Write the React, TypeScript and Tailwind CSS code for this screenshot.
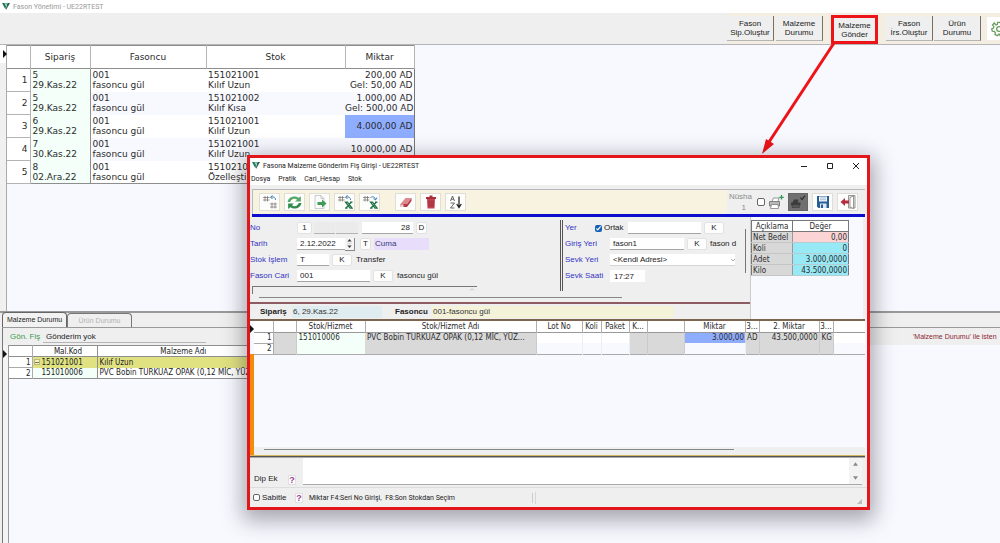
import type { ReactNode } from "react";

const orders = [
  { no: "5", date: "29.Kas.22", code: "151021001", name: "Kılıf Uzun", qty: "200,00 AD", came: "Gel: 50,00 AD" },
  { no: "5", date: "29.Kas.22", code: "151021002", name: "Kılıf Kısa", qty: "1.000,00 AD", came: "Gel: 500,00 AD" },
  { no: "6", date: "29.Kas.22", code: "151021001", name: "Kılıf Uzun", qty: "4.000,00 AD", selected: true },
  { no: "7", date: "30.Kas.22", code: "151021001", name: "Kılıf Uzun", qty: "10.000,00 AD" },
  { no: "8", date: "02.Ara.22", code: "15102100", name: "Özelleştir", qty: "" },
];

const summary = [
  { label: "Net Bedel", value: "0,00", color: "bg-[#fbd5d5]" },
  { label: "Koli", value: "0", color: "bg-[#97e9f5]" },
  { label: "Adet", value: "3.000,0000", color: "bg-[#97e9f5]" },
  { label: "Kilo", value: "43.500,0000", color: "bg-[#97e9f5]" },
];

const grid = "font-['DejaVu_Sans',sans-serif]";
const smallGrid = "font-['DejaVu_Sans_Condensed','DejaVu_Sans',sans-serif]";
const field = "h-3 border-b border-[#a5a5a5] bg-white px-[3px] text-[8px] outline-none";
const label = "w-[47px] shrink-0 text-[#3434c4]";

function Logo() {
  return (
    <svg viewBox="0 0 16 14" className="h-[7px] w-2 shrink-0">
      <path d="M0 0h5l3 6-1 7z" fill="#1d7a5c" />
      <path d="M6 0h4L8.500 5z" fill="#4aa586" />
      <path d="M11 0h5L8 14l0-4z" fill="#23644f" />
    </svg>
  );
}

function MainButton({ top, bottom, mark }: { top: string; bottom: string; mark?: boolean }) {
  return (
    <button
      className={
        mark
          ? "h-[29px] w-[47px] shrink-0 self-end border-[3px] border-[#ec1319] bg-[#efefef] text-[8px] leading-[9px]"
          : "h-[25px] w-[47px] shrink-0 border-r border-b border-[#75706a] border-b-[#b5b5b5] bg-[#efefef] text-[8px] leading-[9px]"
      }
    >
      <span className="-mx-1 block">{top}</span>
      <span className="-mx-1 block">{bottom}</span>
    </button>
  );
}

function ToolButton({ title, dark, children }: { title: string; dark?: boolean; children: ReactNode }) {
  return (
    <button
      aria-label={title}
      className={
        dark
          ? "flex h-[18px] w-5 shrink-0 items-center justify-center border border-[#666] bg-[#707070]"
          : "flex h-[18px] w-[21px] shrink-0 items-center justify-center border border-[#e0ded6] bg-[#fdfdfb]"
      }
    >
      {children}
    </button>
  );
}

function SmallButton({ text, wide }: { text: string; wide?: boolean }) {
  return (
    <button
      className={
        wide
          ? "h-3 w-5 shrink-0 rounded-xs border border-[#e2e2e2] bg-[#fdfdfd] text-[8px] leading-[10px]"
          : "h-3 w-[11px] shrink-0 rounded-xs border border-[#e2e2e2] bg-[#fdfdfd] text-[8px] leading-[10px]"
      }
    >
      {text}
    </button>
  );
}

function HashIcon({ excel, down }: { excel?: boolean; down?: boolean }) {
  return (
    <svg viewBox="0 0 32 28" className="h-[14px] w-4" fill="none">
      <path d="M6 2v11M11 2v11M2 5h13M2 10h13" stroke="#77736e" strokeWidth="1.500" />
      {down ? (
        <path d="M17 5c5-3 9-1 10 4M23 7l4 3 3-5" stroke="#3f7fb8" strokeWidth="2" />
      ) : (
        <path d="M27 10c0-5-3-7-9-6M21 1l-4 3 4 4" stroke="#3f7fb8" strokeWidth="2" />
      )}
      {excel ? (
        <path d="M17 14h4l9 12h-4zM29 14l-11 12M16 26h5M26 14h5" stroke="#217346" strokeWidth="2.500" />
      ) : (
        <path d="M20 15v12M26 15v12M16 18h14M16 24h14" stroke="#77736e" strokeWidth="1.500" />
      )}
    </svg>
  );
}

function RefreshIcon() {
  return (
    <svg viewBox="0 0 32 28" className="h-[15px] w-[17px]">
      <path d="M3 13C4 5 12 1 20 3l4 2 4-3v10H17l4-3c-6-4-11-1-13 4z" fill="#58a969" />
      <path d="M29 15c-1 8-9 12-17 10l-4-2-4 3V16h11l-4 3c6 4 11 1 13-4z" fill="#318b4b" />
    </svg>
  );
}

function ExportIcon() {
  return (
    <svg viewBox="0 0 28 28" className="size-[14px]">
      <path d="M4 1h12l6 6v20H4z" fill="#fafafa" stroke="#9a9a9a" />
      <path d="M16 1v6h6" fill="none" stroke="#9a9a9a" />
      <path d="M9 14h9V9l9 8-9 8v-5H9z" fill="#3f9c55" />
    </svg>
  );
}

function EraserIcon() {
  return (
    <svg viewBox="0 0 28 22" className="h-[11px] w-[14px]">
      <path d="M13 2h12l-9 12H3z" fill="#dc8a90" />
      <path d="M3 14h13v6H3zM16 14l9-12v6l-9 12z" fill="#b43c47" />
      <path d="M3 15h6v5H3z" fill="#f0d5d8" />
    </svg>
  );
}

function TrashIcon() {
  return (
    <svg viewBox="0 0 24 28" className="h-[14px] w-3">
      <path d="M9 1h6v3h7v4H2V4h7z" fill="#a92f3b" />
      <path d="M4 8h16l-1 19H5z" fill="#c54350" />
      <path d="M8 11v13M12 11v13M16 11v13" stroke="#8d2530" strokeWidth="1.500" />
    </svg>
  );
}

function SortIcon() {
  return (
    <svg viewBox="0 0 28 28" className="size-[14px]" fill="none" stroke="#555">
      <path d="M3 12L7 2l4 10M4.500 8.500h5M3 16h8l-8 10h8" strokeWidth="1.800" />
      <path d="M20 3v21M15.500 18l4.500 7 4.500-7" stroke="#222" strokeWidth="2.500" />
    </svg>
  );
}

function PrinterPlusIcon() {
  return (
    <svg viewBox="0 0 32 32" className="size-4 shrink-0" fill="none">
      <path d="M8 15l3-7h11l-2 7" fill="#fff" stroke="#777" strokeWidth="1.500" />
      <path d="M3 15h20v9H3z" fill="#b9b9b9" stroke="#666" strokeWidth="1.500" />
      <path d="M7 21h13l1 8H5z" fill="#fff" stroke="#777" strokeWidth="1.500" />
      <path d="M27 2v9M22.500 6.500h9" stroke="#33995b" strokeWidth="2.500" />
    </svg>
  );
}

function PrinterCheckIcon() {
  return (
    <svg viewBox="0 0 32 28" className="h-[14px] w-4" fill="none">
      <path d="M5 15l3-6h9l-1 6h5v6H2v-6z" fill="#3c3c3c" />
      <path d="M6 19h12l1 6H4z" fill="#585858" stroke="#333" />
      <path d="M21 5l3 4 6-8" stroke="#2e2e2e" strokeWidth="2.500" />
    </svg>
  );
}

function SaveIcon() {
  return (
    <svg viewBox="0 0 28 28" className="size-[14px]">
      <path d="M2 2h24v24H5l-3-3z" fill="#275d97" />
      <path d="M6 3h16v10H6z" fill="#f4f8fb" />
      <path d="M8 6h12M8 9.500h12" stroke="#89a9c7" strokeWidth="1.500" />
      <path d="M8 17h13v9H8z" fill="#dce8f2" />
      <path d="M10 19h4v7h-4z" fill="#275d97" />
    </svg>
  );
}

function ExitIcon() {
  return (
    <svg viewBox="0 0 32 28" className="h-[14px] w-4">
      <path d="M17 1h13v25H17z" fill="#ececec" stroke="#7a7a7a" strokeWidth="1.500" />
      <path d="M20 5l7-3v25l-7-3z" fill="#fff" stroke="#7a7a7a" strokeWidth="1.500" />
      <path d="M1 14l9-8v5h8v6h-8v5z" fill="#b52d3b" />
    </svg>
  );
}

function GearIcon() {
  return (
    <svg viewBox="0 0 24 24" className="size-4 shrink-0" fill="none" stroke="#6c9d61" strokeWidth="2">
      <path d="M10 2h4l.500 3 2 1 2.800-1.500 2.500 3-2 2.300.7 2.200 2.500 1-1 3.500-3 .2-1.500 2 .5 3-3.500 1.300L12 19.500 9.500 22 6 20.500l.5-3-1.500-2-3-.3-1-3.400 2.700-1.200.6-2.100-2-2.500 2.500-3L7.500 6l2-1z" />
      <circle cx="12" cy="12" r="3.500" />
    </svg>
  );
}

function OrdersTable() {
  const head = "border-r border-[#b4b4b4] font-normal";
  return (
    <table className={`${grid} w-[407px] table-fixed border-collapse border-y border-[#8e8e8e] bg-white text-[9px] leading-[10px] text-[#2c2c2c]`}>
      <colgroup>
        <col className="w-[23px]" />
        <col className="w-[60px]" />
        <col className="w-[116px]" />
        <col className="w-[139px]" />
        <col className="w-[69px]" />
      </colgroup>
      <thead>
        <tr className="h-[23px] border-b border-[#8e8e8e]">
          <th className={head}></th>
          <th className={head}>Sipariş</th>
          <th className={head}>Fasoncu</th>
          <th className={head}>Stok</th>
          <th className={head}>Miktar</th>
        </tr>
      </thead>
      <tbody>
        {orders.map((o, i) => (
          <tr key={i} className="h-[23px] even:bg-[#f8f8ff]">
            <td className="border-r border-b border-[#b4b4b4] bg-white p-0 pr-[2px] text-right">{i + 1}</td>
            <td className="border-r border-[#8e8e8e] bg-[#f3fff8] p-0 pl-[2px]">
              {o.no}
              <br />
              {o.date}
            </td>
            <td className="p-0 pl-[2px]">
              001
              <br />
              fasoncu gül
            </td>
            <td className="overflow-hidden p-0 pl-[2px] whitespace-nowrap">
              {o.code}
              <br />
              {o.name}
            </td>
            <td
              className={
                o.selected
                  ? "border-r border-[#777] bg-[#8fadff] p-0 pr-px text-right whitespace-nowrap"
                  : "border-r border-[#777] p-0 pr-px text-right whitespace-nowrap"
              }
            >
              {o.qty}
              {o.came && (
                <>
                  <br />
                  {o.came}
                </>
              )}
            </td>
          </tr>
        ))}
      </tbody>
    </table>
  );
}

function MaterialPanel() {
  return (
    <section className="flex min-h-[232px] flex-1 flex-col border-t-2 border-[#999] bg-[#efefef] pl-[2px]">
      <div className="flex h-[15px] items-end border-b border-[#999]">
        <button className="h-[15px] w-[65px] rounded-t-sm border border-b-0 border-[#666] bg-[#f2f2f2] text-[7px] whitespace-nowrap">
          Malzeme Durumu
        </button>
        <button className="h-[14px] w-[65px] rounded-t-sm border border-b-0 border-[#777] text-[7px] whitespace-nowrap text-[#b3b3b3]">
          Ürün Durumu
        </button>
      </div>
      <div className="flex h-[17px] items-center justify-between border-l border-[#777] pl-[7px]">
        <div className="flex items-center">
          <label htmlFor="shipment" className="w-[33px] text-[#3c9a4b]">
            Gön. Fiş
          </label>
          <input
            id="shipment"
            defaultValue="Gönderim yok"
            className="h-[13px] w-[163px] border-b border-[#b5b5b5] pl-[3px] text-[8px] outline-none"
          />
        </div>
        <p className="w-[87px] text-[7px] whitespace-nowrap text-[#8c2633]">'Malzeme Durumu' ile isten</p>
      </div>
      <div className="flex flex-1 border-l border-[#777] bg-[#f8f8ff]">
        <div className="w-[5px] shrink-0 bg-[#f4f4f4] pt-[5px]">
          <Marker />
        </div>
        <div className="min-w-0 flex-1 border-l border-[#999]">
          <table className={`${smallGrid} w-[300px] table-fixed border-collapse border-y border-[#8e8e8e] bg-white text-[8px] leading-[9px]`}>
            <colgroup>
              <col className="w-[23px]" />
              <col className="w-[65px]" />
              <col className="w-[212px]" />
            </colgroup>
            <thead>
              <tr className="h-[11px] border-b border-[#8e8e8e]">
                <th className="border-r border-[#aaa] p-0"></th>
                <th className="border-r border-[#8e8e8e] p-0 pl-[7px] font-normal">Mal.Kod</th>
                <th className="p-0 pr-[40px] font-normal">Malzeme Adı</th>
              </tr>
            </thead>
            <tbody>
              <tr className="h-[11px] bg-[#e0e281]">
                <td className="border-r border-b border-[#aaa] bg-white p-0 pr-px text-right">1</td>
                <td className="border-r border-[#8e8e8e] p-0 pl-px">
                  <div className="flex items-center gap-[2px]">
                    <button aria-label="Daralt" className="flex size-[6px] items-center border border-[#b8b77c] bg-[#f5f3c5]">
                      <span className="block h-px w-full bg-[#77754c]" />
                    </button>
                    151021001
                  </div>
                </td>
                <td className="p-0 pl-[2px]">Kılıf Uzun</td>
              </tr>
              <tr className="h-[11px]">
                <td className="border-r border-[#aaa] p-0 pr-px text-right">2</td>
                <td className="border-r border-[#8e8e8e] bg-[#f3fff8] p-0 pl-[9px]">151010006</td>
                <td className="p-0 pl-[2px] whitespace-nowrap">PVC Bobin TURKUAZ OPAK (0,12 MİC, YÜZ...</td>
              </tr>
            </tbody>
          </table>
        </div>
      </div>
    </section>
  );
}

function Marker() {
  return (
    <svg viewBox="0 0 4 8" className="h-2 w-1 shrink-0">
      <path d="M0 0l4 4-4 4z" fill="#111" />
    </svg>
  );
}

function DialogToolbar() {
  return (
    <div className="mx-[2px] mt-1 flex h-[25px] items-center border-t border-l border-[#b9b9b9] bg-[#f8f3e0] pl-[6px]">
      <div className="flex gap-1">
        <ToolButton title="Satır ekle"><HashIcon /></ToolButton>
        <ToolButton title="Yenile"><RefreshIcon /></ToolButton>
        <ToolButton title="Aktar"><ExportIcon /></ToolButton>
        <ToolButton title="Excel'den al"><HashIcon excel /></ToolButton>
        <ToolButton title="Excel'e gönder"><HashIcon excel down /></ToolButton>
      </div>
      <div className="ml-[15px] flex gap-1">
        <ToolButton title="Temizle"><EraserIcon /></ToolButton>
        <ToolButton title="Sil"><TrashIcon /></ToolButton>
        <ToolButton title="Sırala"><SortIcon /></ToolButton>
      </div>
      <div className="ml-auto flex h-full items-center bg-[#efefef] pr-[7px]">
        <label htmlFor="copies" className="w-[25px] text-right leading-[11px] text-[#8b8b8b]">
          Nüsha
          <span className="block pr-[6px]">1</span>
        </label>
        <input id="copies" type="checkbox" className="ml-[5px] size-2 appearance-none rounded-xs border border-[#666] bg-white" />
        <div className="ml-[3px] mr-1">
          <PrinterPlusIcon />
        </div>
        <div className="flex gap-1">
          <ToolButton title="Yazdır" dark><PrinterCheckIcon /></ToolButton>
          <ToolButton title="Kaydet"><SaveIcon /></ToolButton>
          <ToolButton title="Çıkış"><ExitIcon /></ToolButton>
        </div>
      </div>
    </div>
  );
}

function FormLeft() {
  return (
    <div className="w-[310px] shrink-0 pt-[5px]">
      <div className="flex flex-col gap-1">
        <div className="flex h-3 items-center">
          <label htmlFor="no" className={label}>No</label>
          <button className="mr-[2px] h-3 w-[15px] rounded-xs border border-[#e2e2e2] bg-[#fdfdfd] text-[8px] leading-[10px]">1</button>
          <span className="mr-px h-3 w-[21px] border-b border-[#b5b5b5] bg-[#ebebeb]" />
          <span className="mr-1 h-3 w-[22px] border-b border-[#b5b5b5] bg-[#ebebeb]" />
          <input id="no" defaultValue="28" className={`${field} mr-[3px] w-[51px] text-right`} />
          <SmallButton text="D" />
        </div>
        <div className="flex h-3 items-center">
          <label htmlFor="date" className={label}>Tarih</label>
          <input id="date" defaultValue="2.12.2022" className={`${field} w-[48px]`} />
          <button aria-label="Tarih değiştir" className="mr-[5px] flex h-[13px] w-[10px] items-center justify-center border-r border-b border-[#888] bg-[#f5f5f5]">
            <svg viewBox="0 0 10 18" className="h-[9px] w-[5px]">
              <path d="M5 0l4 5H1zM0 9h10M1 13h8l-4 5z" fill="#333" stroke="#999" strokeWidth=".6" />
            </svg>
          </button>
          <SmallButton text="T" />
          <output className="ml-[3px] h-3 w-[55px] bg-[#e8defc] pl-px leading-[12px] text-[#353b78]">Cuma</output>
        </div>
        <div className="flex h-3 items-center">
          <label htmlFor="process" className={label}>Stok İşlem</label>
          <input id="process" defaultValue="T" className={`${field} mr-[3px] w-8`} />
          <SmallButton text="K" wide />
          <span className="ml-1">Transfer</span>
        </div>
        <div className="flex h-3 items-center">
          <label htmlFor="account" className={label}>Fason Cari</label>
          <input id="account" defaultValue="001" className={`${field} mr-[3px] w-[73px]`} />
          <SmallButton text="K" wide />
          <span className="ml-1">fasoncu gül</span>
        </div>
      </div>
      <div className="mt-1 ml-[2px] flex h-2 w-[225px] justify-end border-t border-l border-[#777] pr-[3px]">
        <svg viewBox="0 0 6 6" className="mt-px size-1">
          <path d="M0 4l3-3 3 3" fill="none" stroke="#aaa" />
        </svg>
      </div>
    </div>
  );
}

function FormRight() {
  return (
    <div className="my-[3px] flex min-w-0 flex-1 flex-col gap-1 overflow-hidden border-l-[3px] border-double border-[#555] pt-[2px] pl-[2px]">
      <div className="flex h-3 items-center">
        <label htmlFor="place" className="w-[30px] shrink-0 text-[#3434c4]">Yer</label>
        <label className="flex w-[33px] shrink-0 items-center gap-[2px]">
          <input type="checkbox" defaultChecked className="size-[7px] shrink-0 accent-[#1560b5]" />
          Ortak
        </label>
        <input id="place" className={`${field} mr-[3px] w-[73px] shrink-0`} />
        <SmallButton text="K" wide />
      </div>
      <div className="flex h-3 items-center whitespace-nowrap">
        <label htmlFor="entry" className="w-[45px] shrink-0 text-[#3434c4]">Giriş Yeri</label>
        <input id="entry" defaultValue="fason1" className={`${field} mr-[3px] w-[74px] shrink-0`} />
        <SmallButton text="K" wide />
        <span className="ml-[3px]">fason d</span>
      </div>
      <div className="flex h-3 items-center">
        <label htmlFor="address" className="w-[45px] shrink-0 text-[#3434c4]">Sevk Yeri</label>
        <div className="relative flex w-[125px]">
          <select id="address" className="h-3 w-full appearance-none border-b border-[#d5d5d5] bg-white pl-[3px] text-[8px] leading-[10px]">
            <option>&lt;Kendi Adresi&gt;</option>
          </select>
          <svg viewBox="0 0 4 4" className="pointer-events-none absolute top-1 right-0 size-1">
            <path d="M0 1l2 2 2-2" fill="none" stroke="#aaa" />
          </svg>
        </div>
      </div>
      <div className="flex h-3 items-center">
        <label htmlFor="time" className="w-[45px] shrink-0 text-[#3434c4]">Sevk Saati</label>
        <input id="time" defaultValue="17:27" className="h-3 w-[35px] bg-white pl-1 text-[8px] outline-none" />
      </div>
    </div>
  );
}

function SummaryTable() {
  return (
    <table className={`${smallGrid} mt-[3px] w-[98px] table-fixed border-collapse border border-[#777] text-[8px] leading-[9px] text-[#2c2c2c]`}>
      <thead>
        <tr className="h-[11px] border-b border-[#777] bg-white">
          <th className="w-[41px] border-r border-[#777] p-0 font-normal">Açıklama</th>
          <th className="p-0 font-normal">Değer</th>
        </tr>
      </thead>
      <tbody>
        {summary.map((s) => (
          <tr key={s.label} className="h-[11px]">
            <td className="border-r border-b border-[#999] border-b-[#c5c5c5] bg-[#d8d8d8] p-0 pl-px whitespace-nowrap">{s.label}</td>
            <td className={`${s.color} border-b border-[#b5cdd2] p-0 pr-px text-right`}>{s.value}</td>
          </tr>
        ))}
      </tbody>
    </table>
  );
}

function LinesTable() {
  const th = "overflow-hidden border-r border-[#b0b0b0] p-0 font-normal whitespace-nowrap";
  const gray = "border-r border-[#cbcbcb] bg-[#d9d9d9] p-0 pl-[2px] whitespace-nowrap";
  const open = "border-r border-[#ededf5] p-0";
  return (
    <table className={`${smallGrid} w-full table-fixed border-collapse border-b border-[#aaa] bg-white text-[8px] leading-[9px] text-[#2c2c2c]`}>
      <colgroup>
        <col className="w-[19px]" />
        <col className="w-[23px]" />
        <col className="w-[69px]" />
        <col className="w-[171px]" />
        <col className="w-[46px]" />
        <col className="w-[19px]" />
        <col className="w-[28px]" />
        <col className="w-[18px]" />
        <col className="w-[37px]" />
        <col className="w-[61px]" />
        <col className="w-[14px]" />
        <col className="w-[60px]" />
        <col className="w-[14px]" />
        <col />
      </colgroup>
      <thead>
        <tr className="h-[11px] border-b border-[#999]">
          <th className={th}></th>
          <th className={th}></th>
          <th className={th}>Stok/Hizmet</th>
          <th className={th}>Stok/Hizmet Adı</th>
          <th className={th}>Lot No</th>
          <th className={th}>Koli</th>
          <th className={th}>Paket</th>
          <th className={th}>K...</th>
          <th className={th}></th>
          <th className={th}>Miktar</th>
          <th className={th}>3...</th>
          <th className={th}>2. Miktar</th>
          <th className={th}>3...</th>
          <th></th>
        </tr>
      </thead>
      <tbody>
        <tr className="h-[11px]">
          <td className="border-r border-b border-[#aaa] p-0 pr-px text-right">1</td>
          <td className={gray}></td>
          <td className="bg-[#f3fff8] p-0 pl-[2px]">151010006</td>
          <td className={gray}>PVC Bobin TURKUAZ OPAK (0,12 MİC, YÜZ...</td>
          <td className={open}></td>
          <td className={open}></td>
          <td className={open}></td>
          <td className={gray}></td>
          <td className={gray}></td>
          <td className="bg-[#8fadff] p-0 pr-px text-right">3.000,00</td>
          <td className={gray}>AD</td>
          <td className={`${gray} pr-px text-right`}>43.500,0000</td>
          <td className={gray}>KG</td>
          <td></td>
        </tr>
        <tr className="h-[11px] bg-[#f8f8ff]">
          <td className="border-r border-[#aaa] bg-white p-0 pr-px text-right">2</td>
          <td className={gray}></td>
          <td className="bg-[#f3fff8] p-0"></td>
          <td className={gray}></td>
          <td className={open}></td>
          <td className={open}></td>
          <td className={open}></td>
          <td className={gray}></td>
          <td className={gray}></td>
          <td className={open}></td>
          <td className={gray}></td>
          <td className={gray}></td>
          <td className={gray}></td>
          <td></td>
        </tr>
      </tbody>
    </table>
  );
}

function DispatchDialog() {
  return (
    <div
      role="dialog"
      aria-label="Fasona Malzeme Gönderim Fiş Girişi"
      className="absolute top-[155px] right-[130px] left-[247px] border-[3px] border-[#e3161b] bg-[#efefef] shadow-[0_6px_20px_4px_rgba(40,40,50,0.4)]"
    >
      <header className="bg-white font-[Roboto,sans-serif] text-[#222]">
        <div className="flex h-[15px] items-center gap-[3px] pl-[2px]">
          <Logo />
          <h2 className="text-[7px]">Fasona Malzeme Gönderim Fiş Girişi - UE22RTEST</h2>
          <div className="ml-auto flex gap-[18px] pr-[7px]">
            <button aria-label="Küçült" className="size-2">
              <svg viewBox="0 0 8 8" className="size-2"><path d="M1 4.500h6" stroke="#222" /></svg>
            </button>
            <button aria-label="Büyüt" className="size-2">
              <svg viewBox="0 0 8 8" className="size-2"><path d="M1.500 1.500h5v5h-5z" fill="none" stroke="#222" /></svg>
            </button>
            <button aria-label="Kapat" className="size-2">
              <svg viewBox="0 0 8 8" className="size-2"><path d="M1 1l6 6M7 1L1 7" stroke="#222" /></svg>
            </button>
          </div>
        </div>
        <nav className="flex h-[12px] items-center gap-2 pl-px text-[7px]">
          <button>Dosya</button>
          <button>Pratik</button>
          <button>Cari_Hesap</button>
          <button>Stok</button>
        </nav>
      </header>
      <DialogToolbar />
      <div className="mx-[2px] h-[3px] bg-[#0d0dce]" />
      <div className="flex">
        <div className="min-w-0 flex-1">
          <div className="flex h-[77px] pr-[4px]">
            <FormLeft />
            <FormRight />
            <div className="mt-[12px] ml-1 h-[44px] w-px bg-[#777]" />
          </div>
          <div className="mt-[3px] ml-[9px] h-px w-[363px] bg-[#888]" />
          <div className="mt-1 h-[2px] bg-[#8f5b63]" />
          <div className="flex h-[15px] items-center">
            <b className="w-[42px] pl-[10px]">Sipariş</b>
            <span className="h-3 w-[90px] bg-[#dfecf0] pl-px leading-[12px] text-[#353535]">6, 29.Kas.22</span>
            <b className="w-[50px] pl-[13px]">Fasoncu</b>
            <span className="h-3 w-[242px] bg-[#f4f2d8] pl-px leading-[12px] text-[#353535]">001-fasoncu gül</span>
          </div>
        </div>
        <div className="mr-1 w-[113px] shrink-0 border-l border-[#ccc] bg-[#f8f8ff]">
          <SummaryTable />
        </div>
      </div>
      <div className="mr-[2px] h-[2px] bg-[#7d6650]" />
      <div className="flex h-[134px] bg-[#f8f8ff]">
        <div className="flex w-1 shrink-0 flex-col bg-[#f8f8ff]">
          <div className="h-[33px] pt-1">
            <Marker />
          </div>
          <div className="flex-1 bg-[#f58a0b]" />
        </div>
        <div className="flex min-w-0 flex-1 flex-col justify-between pr-[2px]">
          <LinesTable />
          <div className="h-[8px] bg-[#efefef] pt-[2px]">
            <div className="ml-[10px] h-px w-[470px] bg-[#888]" />
          </div>
        </div>
      </div>
      <div className="mr-[2px] h-[3px] border-y border-t-[#d1b75e] border-b-[#aaa] bg-[#555]" />
      <div className="flex h-[27px] pr-[5px]">
        <label htmlFor="note" className="w-[38px] shrink-0 self-end pb-px pl-1">Dip Ek</label>
        <button aria-label="Yardım" className="mr-[5px] h-[10px] w-2 shrink-0 self-end border border-[#e0e0e0] bg-white text-[9px] leading-[8px] font-bold text-[#9c3e93]">?</button>
        <textarea id="note" className="mr-0 ml-[2px] min-w-0 flex-1 resize-none border-b border-[#aaa] bg-white outline-none" />
        <div className="flex w-[13px] flex-col items-center justify-between border-b border-[#aaa] bg-[#f3f3f3] py-1">
          <svg viewBox="0 0 6 4" className="h-1 w-[5px]"><path d="M3 0l3 4H0z" fill="#888" /></svg>
          <svg viewBox="0 0 6 4" className="h-1 w-[5px]"><path d="M3 4l3-4H0z" fill="#888" /></svg>
        </div>
      </div>
      <footer className="mt-[2px] flex h-5 items-center border-t border-[#ddd] pl-[3px]">
        <label className="flex w-[42px] items-center gap-[2px]">
          <input type="checkbox" className="size-[7px] appearance-none rounded-xs border border-[#666] bg-white" />
          Sabitle
        </label>
        <button aria-label="Yardım" className="h-[10px] w-2 border border-[#e0e0e0] bg-white text-[9px] leading-[8px] font-bold text-[#9c3e93]">?</button>
        <span className="ml-[6px] w-[224px] border-r border-[#ccc] font-[Roboto,sans-serif] text-[7px] whitespace-pre">
          Miktar F4:Seri No Girişi,  F8:Son Stokdan Seçim
        </span>
        <span className="ml-[2px] h-3 w-px bg-[#d5d5d5]" />
        <svg viewBox="0 0 6 6" className="mt-2 mr-[5px] ml-auto size-[5px]"><path d="M6 0v6H0z" fill="#bbb" /></svg>
      </footer>
    </div>
  );
}

export default function App() {
  return (
    <div className="relative flex min-h-screen flex-col overflow-hidden bg-[#f8f8ff] font-['Liberation_Sans',Arial,sans-serif] text-[8px] leading-[10px] text-[#222]">
      <header className="flex h-[13px] items-center gap-[3px] bg-white pl-[2px] font-[Roboto,sans-serif]">
        <Logo />
        <h1 className="text-[7px] text-[#999]">Fason Yönetimi - UE22RTEST</h1>
      </header>
      <div className="flex h-8 justify-end border-b border-[#b5b5b5] bg-[#efefef]">
        <div className="flex w-[273px] items-center bg-[#f3eee1]">
          <div className="flex w-[104px] gap-[2px]">
            <MainButton top="Fason" bottom="Sip.Oluştur" />
            <MainButton top="Malzeme" bottom="Durumu" />
          </div>
          <MainButton top="Malzeme" bottom="Gönder" mark />
          <div className="ml-2 flex gap-px">
            <MainButton top="Fason" bottom="İrs.Oluştur" />
            <MainButton top="Ürün" bottom="Durumu" />
          </div>
          <button aria-label="Ayarlar" className="ml-[6px] flex h-[23px] w-[13px] items-center overflow-hidden bg-white pl-1">
            <GearIcon />
          </button>
        </div>
      </div>
      <div className="flex min-h-[266px] items-start">
        <div className="w-[7px] shrink-0 self-stretch border-r border-[#aaa] bg-[#f0f0f0]">
          <div className="h-[18px] bg-white pt-[5px] pl-[3px]">
            <Marker />
          </div>
        </div>
        <OrdersTable />
      </div>
      <MaterialPanel />
      <svg viewBox="0 0 80 114" className="absolute top-[41px] right-[160px] h-[114px] w-20" fill="#ec1319">
        <path d="M74 2L9 101" stroke="#ec1319" strokeWidth="3" />
        <path d="M2 113L6 98l8 5z" />
      </svg>
      <DispatchDialog />
    </div>
  );
}
